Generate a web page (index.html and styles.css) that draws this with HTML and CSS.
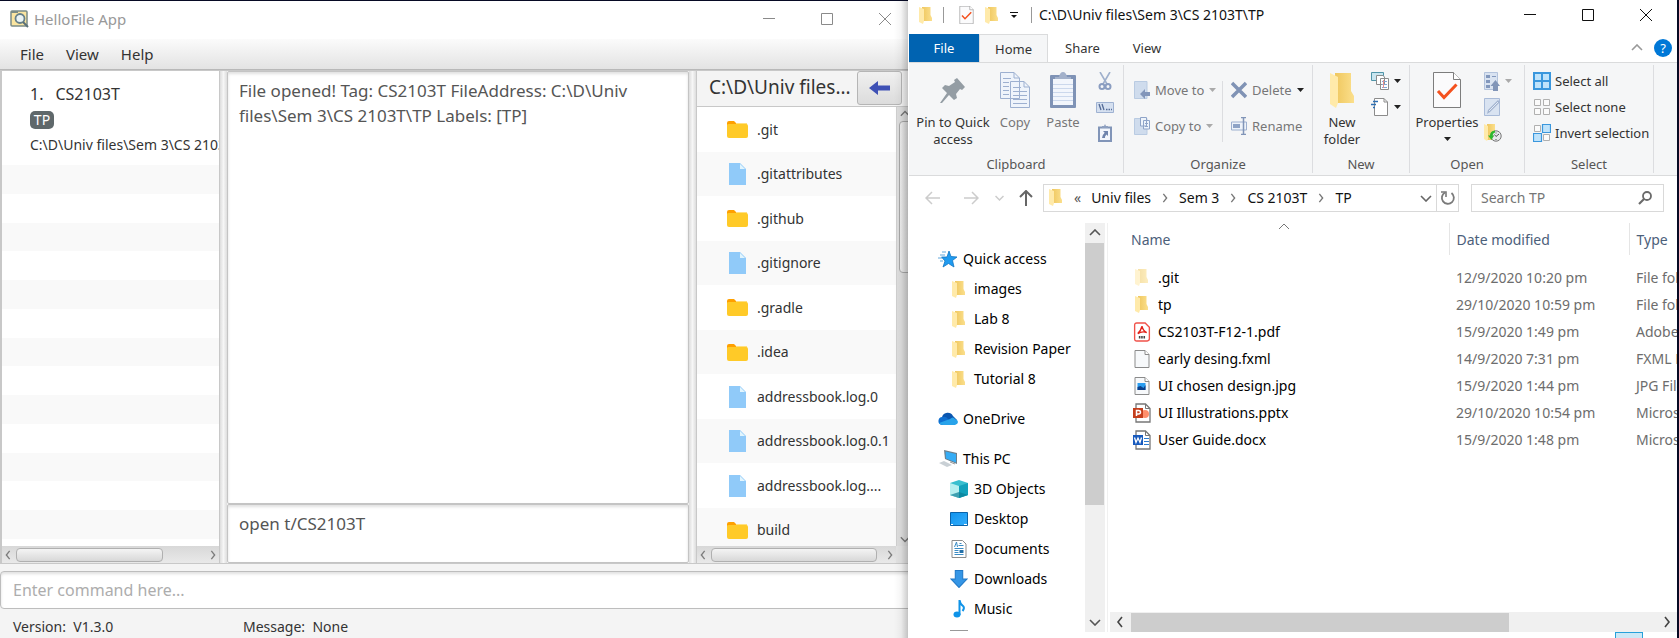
FILE: index.html
```
<!DOCTYPE html>
<html lang="en">
<head>
<meta charset="utf-8">
<title>HelloFile App</title>
<link rel="stylesheet" href="styles.css">
</head>
<body>
<svg class="defs" aria-hidden="true">
  <defs>
    <linearGradient id="gold" x1="0" y1="0" x2="1" y2="0"><stop offset="0" stop-color="#efc75e"/><stop offset="1" stop-color="#fbdf8c"/></linearGradient>
    <linearGradient id="blue" x1="0" y1="0" x2="1" y2="1"><stop offset="0" stop-color="#0f93ee"/><stop offset="1" stop-color="#35aefb"/></linearGradient>
  </defs>
  <symbol id="folder" viewBox="0 0 13 17"><path d="M3 0H11.5V8L13 11V14H3z" fill="url(#gold)"/><path d="M0 0 5 2V14L4 17 0 15z" fill="#ffeaaa"/></symbol>
  <symbol id="app-folder" viewBox="0 0 21 17"><path d="M0 2Q0 0 2 0H7L9 2H20V8H0z" fill="#ffa000"/><path d="M9 2H20V4H9z" fill="#ffe082"/><path d="M0 4Q0 3 2 3H19Q21 3 21 5V15Q21 17 19 17H2Q0 17 0 15z" fill="#ffca28"/></symbol>
  <symbol id="app-file" viewBox="0 0 17 22"><path d="M0 0H11L17 6V22H0z" fill="#90caf9"/><path d="M11 1V6H16z" fill="#e1f5fe"/></symbol>
  <symbol id="left" viewBox="0 0 8 12"><path d="M6 1 2 6 6 11" fill="none" stroke="currentColor" stroke-width="1.600"/></symbol>
  <symbol id="right" viewBox="0 0 8 12"><path d="M2 1 6 6 2 11" fill="none" stroke="currentColor" stroke-width="1.600"/></symbol>
  <symbol id="up" viewBox="0 0 12 8"><path d="M1 6 6 1 11 6" fill="none" stroke="currentColor" stroke-width="1.600"/></symbol>
  <symbol id="down" viewBox="0 0 12 8"><path d="M1 2 6 7 11 2" fill="none" stroke="currentColor" stroke-width="1.600"/></symbol>
  <symbol id="caret" viewBox="0 0 7 4"><path d="M0 0H7L3.500 4z" fill="currentColor"/></symbol>
  <symbol id="check-page" viewBox="0 0 28 36"><path d="M.5.5H20.500L27.500 7.500V35.500H.5z" fill="#fbfbfc" stroke="#7d7d7d"/><path d="M20.500.5V7.500H27.500" fill="#fff" stroke="#7d7d7d"/><path d="M5 19 11 25.500 23.500 12.500" fill="none" stroke="#f4511e" stroke-width="3"/></symbol>
  <symbol id="page" viewBox="0 0 15 18"><path d="M.5.5H10.500L14.500 4.500V17.500H.5z" fill="#f7f9fb" stroke="#8b8b8b"/><path d="M10.500.5V4.500H14.500" fill="#fff" stroke="#8b8b8b"/></symbol>
</svg>

<main class="desktop">
<section class="app" aria-label="HelloFile App">
  <header class="app-title">
    <svg class="app-logo" viewBox="0 0 19 18"><rect x="1" y="1" width="16" height="15" rx="1" fill="#fae5a0" stroke="#7b8c86" stroke-width="1.500"/><path d="M1 1H8V3H1z" fill="#7b8c86"/><circle cx="10" cy="8.500" r="4.500" fill="#eaf3f4" stroke="#66808a" stroke-width="1.800"/><path d="M13 12 18 17" stroke="#5a7078" stroke-width="2"/></svg>
    <h1>HelloFile App</h1>
    <div class="win-buttons">
      <button aria-label="Minimize"><svg viewBox="0 0 12 12"><path d="M0 5.500H12"/></svg></button>
      <button aria-label="Maximize"><svg viewBox="0 0 12 12"><path d="M.5.5H11.500V11.500H.5z"/></svg></button>
      <button aria-label="Close"><svg viewBox="0 0 12 12"><path d="M0 0 12 12M12 0 0 12"/></svg></button>
    </div>
  </header>
  <nav class="menu"><button>File</button><button>View</button><button>Help</button></nav>

  <div class="split">
    <section class="tags">
      <ol class="tag-list">
        <li class="tag-card">
          <h2><span>1.</span>CS2103T</h2>
          <span class="badge">TP</span>
          <p>C:\D\Univ files\Sem 3\CS 2103T\TP</p>
        </li>
        <li></li><li></li><li></li><li></li><li></li><li></li><li></li><li></li><li></li><li></li><li></li><li></li><li></li><li></li>
      </ol>
      <div class="fx-hbar"><svg><use href="#left"/></svg><div class="rail"><i style="width:78%"></i></div><svg><use href="#right"/></svg></div>
    </section>
    <div class="divider"></div>
    <section class="results">
      <textarea class="result" aria-label="Result" readonly>File opened! Tag: CS2103T FileAddress: C:\D\Univ files\Sem 3\CS 2103T\TP Labels: [TP]</textarea>
      <textarea class="history" aria-label="Last command" readonly>open t/CS2103T</textarea>
    </section>
    <div class="divider"></div>
    <section class="explorer-pane">
      <header><h2>C:\D\Univ files...</h2><button aria-label="Back"><svg viewBox="0 0 21 14"><path d="M0 7 9 0V4.500H21V9.500H9V14z" fill="#3f51b5"/></svg></button></header>
      <div class="pane-body">
        <ul class="pane-list">
          <li><svg class="fd"><use href="#app-folder"/></svg>.git</li>
          <li><svg class="fl"><use href="#app-file"/></svg>.gitattributes</li>
          <li><svg class="fd"><use href="#app-folder"/></svg>.github</li>
          <li><svg class="fl"><use href="#app-file"/></svg>.gitignore</li>
          <li><svg class="fd"><use href="#app-folder"/></svg>.gradle</li>
          <li><svg class="fd"><use href="#app-folder"/></svg>.idea</li>
          <li><svg class="fl"><use href="#app-file"/></svg>addressbook.log.0</li>
          <li><svg class="fl"><use href="#app-file"/></svg>addressbook.log.0.1</li>
          <li><svg class="fl"><use href="#app-file"/></svg>addressbook.log....</li>
          <li><svg class="fd"><use href="#app-folder"/></svg>build</li>
        </ul>
        <div class="fx-vbar"><svg><use href="#up"/></svg><div class="rail"><i style="height:37%"></i></div><svg><use href="#down"/></svg></div>
        <div class="fx-hbar"><svg><use href="#left"/></svg><div class="rail"><i style="width:97%"></i></div><svg><use href="#right"/></svg></div>
        <div class="fx-corner"></div>
      </div>
    </section>
  </div>

  <div class="command"><input type="text" aria-label="Command" placeholder="Enter command here..."></div>
  <footer class="status"><span>Version:&nbsp; V1.3.0</span><span>Message:&nbsp; None</span></footer>
</section>

<section class="files" aria-label="File Explorer">
  <header class="files-title">
    <svg class="ico-f"><use href="#folder"/></svg><i class="bar"></i>
    <svg class="ico-c"><use href="#check-page"/></svg>
    <svg class="ico-f"><use href="#folder"/></svg>
    <svg class="ico-m" viewBox="0 0 8 7"><path d="M0 .5H8" stroke="#111"/><path d="M1 3H7L4 6z" fill="#111"/></svg><i class="bar"></i>
    <h1>C:\D\Univ files\Sem 3\CS 2103T\TP</h1>
    <div class="win-buttons">
      <button aria-label="Minimize"><svg viewBox="0 0 12 12"><path d="M0 5.500H12"/></svg></button>
      <button aria-label="Maximize"><svg viewBox="0 0 12 12"><path d="M.5.5H11.500V11.500H.5z"/></svg></button>
      <button aria-label="Close"><svg viewBox="0 0 12 12"><path d="M0 0 12 12M12 0 0 12"/></svg></button>
    </div>
  </header>
  <nav class="tabs">
    <button class="file">File</button><button class="active">Home</button><button>Share</button><button>View</button>
    <div class="tabs-end">
      <button aria-label="Collapse ribbon"><svg class="collapse"><use href="#up"/></svg></button>
      <button class="help">?</button>
    </div>
  </nav>

  <div class="ribbon">
    <section class="group">
      <div class="tools">
        <button class="big pin"><svg width="26" height="36" viewBox="0 0 26 36"><path d="M17 6 25 15 22 18 20 17 16 22 17 26 14 28 9 23 2 31 0 31 7 21 2 16 5 13 9 14 15 10 14 8z" fill="#949da4"/></svg>Pin to Quick access</button>
        <button class="big copy dim"><svg width="30" height="36" viewBox="0 0 30 36"><path d="M.5.500H14L19.500 6V26.500H.5zM10.500 9.500H24L29.500 15V35.500H10.500z" fill="#eff4fb" stroke="#9db0d0"/><path d="M14 .5V6H19M24 9.500V15H29" fill="none" stroke="#9db0d0"/><path d="M3 6.500H11M3 10.500H9M3 14.500H9M3 18.500H9M3 22.500H9M13 15.500H21M13 19.500H27M13 23.500H27M13 27.500H27M13 31.500H27" stroke="#9db0d0"/></svg>Copy</button>
        <button class="big paste dim"><svg width="26" height="36" viewBox="0 0 26 36"><rect width="26" height="33" y="3" rx="1" fill="#7f93b6"/><path d="M3 7H23V33H3z" fill="#f2f6fc"/><path d="M3 12.500H23M3 16.500H23M3 20.500H23M3 24.500H23M3 28.500H23" stroke="#cbd8ec"/><path d="M5 7V5H9Q10 0 13 0T17 5H21V7z" fill="#a3b1ca"/></svg>Paste</button>
        <div class="stack">
          <button aria-label="Cut"><svg width="14" height="18" viewBox="0 0 14 18"><path d="M2 0 9 12M12 0 5 12" stroke="#9fb0cc" stroke-width="1.600"/><g fill="none" stroke="#8a9dc0" stroke-width="2"><ellipse cx="4" cy="14.500" rx="2.500" ry="2.500"/><ellipse cx="10" cy="14.500" rx="2.500" ry="2.500"/></g></svg></button>
          <button aria-label="Copy path"><svg width="18" height="11" viewBox="0 0 18 11"><path d="M.5.500H17.500V10.500H.5z" fill="#d5e0f0" stroke="#9fb2d2"/><path d="M3 2 5 8M6 2 8 8M10 7.500H11.500M12.500 7.500H14M15 7.500H16" stroke="#546b96" stroke-width="1.300"/></svg></button>
          <button aria-label="Paste shortcut"><svg width="14" height="18" viewBox="0 0 14 18"><path d="M1 3.500H13V17H1z" fill="#f2f6fc" stroke="#8195b8" stroke-width="2"/><path d="M4 4V2H6L7 0 8 2H10V4z" fill="#8ea0c0"/><path d="M5 7H10V12L8.500 10.500Q6.500 12 7 14L4 14Q4 11 6.700 8.700z" fill="#6e84ad"/></svg></button>
        </div>
      </div>
      <h2>Clipboard</h2>
    </section>
    <section class="group">
      <div class="tools organize">
        <div class="stack">
          <button class="dim"><svg width="16" height="18" viewBox="0 0 16 18"><path d="M.5.500H13V17.500H.5z" fill="#cfdced" stroke="#b9cbe2"/><path d="M6 13 11 8V11H16V15H11V18z" fill="#8296ba"/></svg>Move to<svg class="caret"><use href="#caret"/></svg></button>
          <button class="dim"><svg width="16" height="18" viewBox="0 0 16 18"><path d="M.5 1.500H13V17.500H.5z" fill="#cfdced" stroke="#b9cbe2"/><path d="M6.500.5H12.500V9H6.500zM9.500 3.500H15.500V12H9.500z" fill="#eef4fb" stroke="#8fa4c8"/><path d="M11 6.500H14M11 9.500H14" stroke="#8fa4c8"/></svg>Copy to<svg class="caret"><use href="#caret"/></svg></button>
        </div>
        <div class="stack second">
          <button class="dim"><svg width="16" height="18" viewBox="0 0 16 18"><path d="M1 2 15 16M15 2 1 16" stroke="#8093b5" stroke-width="3.500"/></svg>Delete<svg class="caret dark"><use href="#caret"/></svg></button>
          <button class="dim"><svg width="16" height="18" viewBox="0 0 16 18"><path d="M.5 5H15.500V13H.5z" fill="#eef3fa" stroke="#9db0d0"/><path d="M2 7H9V11H2z" fill="#8ea3c6"/><path d="M12.500 1V17M10 .5H15M10 17.500H15" stroke="#8195b8" stroke-width="1.500"/></svg>Rename</button>
        </div>
      </div>
      <h2>Organize</h2>
    </section>
    <section class="group">
      <div class="tools">
        <button class="big new"><svg width="24" height="36" viewBox="0 0 24 36"><path d="M5 1H21V19L24 24V31H5z" fill="url(#gold)"/><path d="M0 1 8 5V31L6 36 0 32z" fill="#ffeaaa"/></svg>New folder</button>
        <div class="stack">
          <button aria-label="New item"><svg width="18" height="18" viewBox="0 0 18 18"><path d="M.5.500H12.500V8.500H.5z" fill="#c8e5ef" stroke="#4f94a8"/><path d="M5.500 3.500H12L13.500 5V12.500H5.500zM9.500 6.500H17.500V17.500H9.500z" fill="#fff" stroke="#8c8c8c"/><path d="M11 9.500H16M11 12.500H16M11 15.500H16" stroke="#7fa6d8"/><path d="M12.500 8V16" stroke="#e69090"/></svg><svg class="caret dark"><use href="#caret"/></svg></button>
          <button aria-label="Easy access"><svg width="18" height="18" viewBox="0 0 18 18"><path d="M3.500.5H13L16.500 4V17.500H3.500z" fill="#fff" stroke="#8c8c8c"/><path d="M13 .5V4H16.500" fill="none" stroke="#8c8c8c"/><path d="M2 3.500H7M0 6.500H5M2 9.500H4" stroke="#2d6fb3" stroke-width="1.400"/></svg><svg class="caret dark"><use href="#caret"/></svg></button>
        </div>
      </div>
      <h2>New</h2>
    </section>
    <section class="group">
      <div class="tools">
        <button class="big props"><svg width="28" height="36"><use href="#check-page"/></svg>Properties<svg class="caret dark"><use href="#caret"/></svg></button>
        <div class="stack">
          <button aria-label="Open"><svg width="16" height="19" viewBox="0 0 16 19"><path d="M.5.500H13.500V17.500H.5z" fill="#d9e3f1" stroke="#b3c3dc"/><path d="M2 3H6V6H2zM2 8H6V11H2zM2 13H6V16H2z" fill="#8398bd"/><path d="M8 4.500H12" stroke="#8398bd"/><path d="M6.500 14 11.500 8 16 14H14V19H9V14z" fill="#8195b8"/></svg><svg class="caret"><use href="#caret"/></svg></button>
          <button aria-label="Edit"><svg width="16" height="18" viewBox="0 0 16 18"><path d="M.5.500H15.500V17.500H.5z" fill="#d9e3f1" stroke="#a9bbd8"/><path d="M3 16 4 12 14 2 16 4 6 14z" fill="#a3b4d0"/><path d="M5 13 14 4" stroke="#f3f7fc" stroke-width=".8"/></svg></button>
          <button aria-label="History"><svg width="18" height="18" viewBox="0 0 18 18"><path d="M3 0H11V16H3z" fill="url(#gold)"/><path d="M0 0 4 2V15L3 17 0 15z" fill="#ffeaaa"/><circle cx="12" cy="12" r="5.200" fill="#e8eaec" stroke="#777"/><path d="M12 8.500V9.500M12 15V16M8.500 12H9.500M10.500 10.500 12 12.500 15 10" stroke="#555" fill="none"/><path d="M11 6.500Q6 7 6 11.500H4L7.500 16 10 11.500H8.500Q9 9 11 8.500z" fill="#2eb82e"/></svg></button>
        </div>
      </div>
      <h2>Open</h2>
    </section>
    <section class="group">
      <div class="tools">
        <div class="stack select">
          <button><svg width="18" height="18" viewBox="0 0 18 18"><path d="M0 0H18V18H0z" fill="#3a97dd"/><path d="M2 2H8V8H2zM10 2H16V8H10zM2 10H8V16H2zM10 10H16V16H10z" fill="#bfe3fb"/></svg>Select all</button>
          <button><svg width="18" height="18" viewBox="0 0 18 18"><path d="M1.500 1.500H7.500V7.500H1.500zM10.500 1.500H16.500V7.500H10.500zM1.500 10.500H7.500V16.500H1.500zM10.500 10.500H16.500V16.500H10.500z" fill="#fbfbfb" stroke="#b0b0b0"/></svg>Select none</button>
          <button><svg width="18" height="18" viewBox="0 0 18 18"><path d="M1.500 1.500H7.500V7.500H1.500zM10.500 10.500H16.500V16.500H10.500z" fill="#fbfbfb" stroke="#b0b0b0"/><path d="M9.500.5H17.500V8.500H9.500zM.5 9.500H8.500V17.500H.5z" fill="#bfe3fb" stroke="#3a97dd" stroke-width="1.200"/></svg>Invert selection</button>
        </div>
      </div>
      <h2>Select</h2>
    </section>
  </div>

  <div class="address-row">
    <div class="history-nav">
      <button aria-label="Back"><svg viewBox="0 0 16 14"><path d="M15 7H1M7 1 1 7 7 13"/></svg></button>
      <button aria-label="Forward"><svg viewBox="0 0 16 14"><path d="M1 7H15M9 1 15 7 9 13"/></svg></button>
      <button aria-label="Recent" class="recent"><svg viewBox="0 0 8 14"><path d="M0 5 4 9 8 5"/></svg></button>
      <button aria-label="Up" class="up"><svg viewBox="0 0 14 16"><path d="M7 16V1M1 7 7 1 13 7"/></svg></button>
    </div>
    <nav class="address">
      <svg class="ico-f"><use href="#folder"/></svg>
      <span class="more">«</span>
      <a href="#">Univ files</a><svg class="crumb"><use href="#right"/></svg>
      <a href="#">Sem 3</a><svg class="crumb"><use href="#right"/></svg>
      <a href="#">CS 2103T</a><svg class="crumb"><use href="#right"/></svg>
      <a href="#">TP</a>
      <button class="drop" aria-label="Previous locations"><svg width="12" height="8"><use href="#down"/></svg></button>
      <button class="refresh" aria-label="Refresh"><svg width="16" height="16" viewBox="0 0 16 16"><path d="M5 2.500A6 6 0 1 0 11.500 3" fill="none" stroke="#7a7a7a" stroke-width="1.800"/><path d="M1 2H6V7" fill="none" stroke="#7a7a7a" stroke-width="1.600"/></svg></button>
    </nav>
    <div class="search"><input type="text" aria-label="Search TP" placeholder="Search TP"><svg width="14" height="14" viewBox="0 0 14 14"><circle cx="9" cy="5" r="4" fill="none" stroke="#6a6a6a" stroke-width="1.800"/><path d="M6 8 1 13" stroke="#6a6a6a" stroke-width="2.200"/></svg></div>
  </div>

  <div class="browser">
    <nav class="tree">
      <ul>
        <li class="root"><svg viewBox="0 0 20 18"><path d="M11 1 13 6.500 19 7 14.500 10.500 16 17 10.500 13.500 5 17 7 11 3.500 7H9z" fill="#1f9bf0" stroke="#1275c2" stroke-width=".8"/><path d="M4 2H8M2 5H7M0 8H4M2 11H5" stroke="#63a9dd"/></svg>Quick access</li>
        <li><svg class="ico-f"><use href="#folder"/></svg>images</li>
        <li><svg class="ico-f"><use href="#folder"/></svg>Lab 8</li>
        <li><svg class="ico-f"><use href="#folder"/></svg>Revision Paper</li>
        <li><svg class="ico-f"><use href="#folder"/></svg>Tutorial 8</li>
      </ul>
      <ul>
        <li class="root"><svg viewBox="0 0 20 14"><path d="M4 5A6 6 0 0 1 15 4L19 8 8 9z" fill="#0a56b0"/><path d="M4 13A4 4 0 1 1 5 5Q8 4 10 7L14 13z" fill="#0f6fd0"/><path d="M5 13Q2 13 1 11L12 7Q15 4 17 7 20 8 20 10T17 13z" fill="#28a3ea"/></svg>OneDrive</li>
      </ul>
      <ul>
        <li class="root"><svg viewBox="0 0 20 18"><path d="M6 0 19 3V14L7 9z" fill="#6c7f8c"/><path d="M7.500 1.500 18 4V12.500L8 8.500z" fill="#35acf5"/><path d="M1 13 6 11 14 15 9 17z" fill="#c9d0d5"/><path d="M12 12 17 14" stroke="#999"/></svg>This PC</li>
        <li><svg viewBox="0 0 18 18"><path d="M0 3 9 0 18 3V15L9 18 0 15z" fill="#39bfcf"/><path d="M0 3 9 6V18L0 15z" fill="#b6eff0"/><path d="M9 6 18 3V15L9 18z" fill="#12a1bb"/><path d="M0 15 9 12 18 15 9 18z" fill="#0c7f96" opacity=".7"/></svg>3D Objects</li>
        <li><svg viewBox="0 0 18 14"><path d="M.5.5H17.500V13.500H.5z" fill="url(#blue)" stroke="#0a63aa"/><path d="M1 12.500H3M14 12.500H17" stroke="#fff"/></svg>Desktop</li>
        <li><svg viewBox="0 0 15 18"><path d="M.5.5H11L14.500 4V17.500H.5z" fill="#fff" stroke="#8b8b8b"/><path d="M3 7 5 2 6 7M8 3.500H10M7 5.500H12M3 8.500H12M3 10.500H7M3 12.500H7M3 14.500H12" stroke="#3a8bc4" fill="none"/><path d="M8 10H12V13H8z" fill="#2470a8"/></svg>Documents</li>
        <li><svg viewBox="0 0 16 17"><path d="M4.500.5H11.500V8.500H15.500L8 16.500.5 8.500H4.500z" fill="#3596e6" stroke="#2079c8"/></svg>Downloads</li>
        <li><svg viewBox="0 0 12 18"><ellipse cx="4" cy="14.500" rx="3.500" ry="3" fill="#0f93e8"/><path d="M6.500 15V0Q7 4 10 6 12 8 9.500 11" fill="none" stroke="#0f93e8" stroke-width="2"/></svg>Music</li>
        <li><svg viewBox="0 0 18 18"><path d="M0 .5H18" stroke="#999"/></svg></li>
      </ul>
    </nav>
    <div class="vbar"><svg width="12" height="8"><use href="#up"/></svg><div class="rail"><i style="height:71%"></i></div><svg width="12" height="8"><use href="#down"/></svg></div>
    <div class="listing">
      <div class="table-wrap">
        <table>
          <colgroup><col><col class="c-date"><col class="c-type"></colgroup>
          <thead><tr><th>Name<svg class="sort" width="12" height="8" viewBox="0 0 12 8"><path d="M1 6 6 1 11 6" fill="none" stroke="#777"/></svg></th><th>Date modified</th><th>Type</th></tr></thead>
          <tbody>
            <tr><td><div><svg class="ico-f faded"><use href="#folder"/></svg>.git</div></td><td>12/9/2020 10:20 pm</td><td>File folder</td></tr>
            <tr><td><div><svg class="ico-f"><use href="#folder"/></svg>tp</div></td><td>29/10/2020 10:59 pm</td><td>File folder</td></tr>
            <tr><td><div><svg viewBox="0 0 16 19"><path d="M1 3Q1 1 3 1H11L15 5V16Q15 18 13 18H3Q1 18 1 16z" fill="#fff" stroke="#f0524a" stroke-width="1.300"/><path d="M8 4Q7 8 4 11Q8 8.500 12.500 10Q9 8.500 8 4" fill="none" stroke="#e2231a" stroke-width="1.300"/><path d="M5 14.500H11" stroke="#444" stroke-width="2.500" stroke-dasharray="1.500 .7"/></svg>CS2103T-F12-1.pdf</div></td><td>15/9/2020 1:49 pm</td><td>Adobe Acrobat</td></tr>
            <tr><td><div><svg viewBox="-1 -1 17 20"><path d="M.5.5H10.500L14.500 4.500V17.500H.5z" fill="#f7f9fb" stroke="#8b8b8b"/><path d="M10.500.5V4.500H14.500" fill="#fff" stroke="#8b8b8b"/></svg>early desing.fxml</div></td><td>14/9/2020 7:31 pm</td><td>FXML File</td></tr>
            <tr><td><div><svg viewBox="-1 -1 17 20"><path d="M.5.5H10.500L14.500 4.500V17.500H.5z" fill="#f7f9fb" stroke="#8b8b8b"/><path d="M10.500.5V4.500H14.500" fill="#fff" stroke="#8b8b8b"/><path d="M3 6H11V13H3z" fill="#2a9df0"/><path d="M3 13V10L6 9 9 11 11 8V13z" fill="#0b3f8a"/></svg>UI chosen design.jpg</div></td><td>15/9/2020 1:44 pm</td><td>JPG File</td></tr>
            <tr><td><div><svg viewBox="0 0 18 20"><path d="M3 1H12.500L17 5.500V19H3z" fill="#fff" stroke="#777" stroke-width="1.300"/><path d="M12.500 1V5.500H17" fill="none" stroke="#777"/><circle cx="12" cy="11" r="4" fill="#ff8f6b"/><path d="M0 5H10V15H0z" fill="#c43e1c"/><path d="M3.500 13V7.500H5.500Q7.500 7.500 7.500 9.200T5.500 11H4" fill="none" stroke="#fff" stroke-width="1.500"/></svg>UI Illustrations.pptx</div></td><td>29/10/2020 10:54 pm</td><td>Microsoft PowerPoint</td></tr>
            <tr><td><div><svg viewBox="0 0 18 20"><path d="M3 1H12.500L17 5.500V19H3z" fill="#fff" stroke="#777" stroke-width="1.300"/><path d="M12.500 1V5.500H17" fill="none" stroke="#777"/><path d="M11 8.500H16M11 11.500H16M11 14.500H16" stroke="#2b7cd3"/><path d="M0 5H10V15H0z" fill="#185abd"/><path d="M1.500 7.500 3 12.500 5 8 7 12.500 8.500 7.500" fill="none" stroke="#fff" stroke-width="1.300"/></svg>User Guide.docx</div></td><td>15/9/2020 1:48 pm</td><td>Microsoft Word</td></tr>
          </tbody>
        </table>
      </div>
      <div class="hbar"><svg width="8" height="12"><use href="#left"/></svg><div class="rail"><i style="width:72%"></i></div><svg width="8" height="12"><use href="#right"/></svg></div>
    </div>
  </div>
  <footer class="files-foot"><button aria-label="Details view"></button></footer>
</section>
</main>
</body>
</html>
```

FILE: styles.css
```
* { box-sizing: border-box; margin: 0; padding: 0; }
html, body { height: 100%; overflow: hidden; }
body { font: 14px/20px "Noto Sans", "Open Sans", sans-serif; color: #333; }
button, input, textarea { font: inherit; color: inherit; border: 0; background: none; outline: 0; }
h1, h2, th { font-weight: 400; }
ul, ol { list-style: none; }
svg { flex: none; display: block; }
.defs { position: absolute; width: 0; height: 0; }

.desktop { display: flex; height: 100vh; background: #070a24; }

/* HelloFile window */
.app { flex: 908 1 0; min-width: 0; display: flex; flex-direction: column; position: relative; overflow: hidden; margin-top: 1px; background: #f4f4f4; }
.app::after { content: ""; position: absolute; top: 0; right: 0; bottom: 0; width: 14px; pointer-events: none; background: linear-gradient(to right, transparent, rgba(0, 0, 0, .04) 50%, rgba(0, 0, 0, .2)); }
.app-title { flex: none; height: 38px; padding: 0 0 2px 10px; display: flex; align-items: center; gap: 5px; background: #fff; color: #999; }
.app-title h1 { font-size: 15px; flex: 1; }
.app-logo { width: 19px; height: 18px; }
.win-buttons { display: flex; margin-left: auto; }
.win-buttons button { width: 58px; height: 34px; display: flex; align-items: center; justify-content: center; }
.win-buttons svg { width: 12px; height: 12px; fill: none; stroke: currentColor; }
.app-title .win-buttons { margin-right: -6px; color: #8a8a8a; }

.menu { flex: none; height: 31px; padding-left: 9px; display: flex; background: linear-gradient(#fbfbfb, #e3e3e3); border-bottom: 1px solid #b8b8b8; }
.menu button { padding: 0 11px; font-size: 15px; }

.split { flex: 1; min-height: 0; display: grid; grid-template-columns: minmax(0, 220fr) 7px minmax(0, 462fr) 7px minmax(0, 212fr); border-top: 1px solid #c8c8c8; border-bottom: 1px solid #c8c8c8; }
.divider { background: linear-gradient(to right, #ddd, #f6f6f6 50%, #ddd); }
.tags { display: flex; flex-direction: column; min-height: 0; border: 1px solid #c8c8c8; border-width: 0 1px 0 2px; background: #fff; }
.tag-list { flex: 1; min-height: 0; overflow: hidden; }
.tag-list li { height: 29px; }
.tag-list li:nth-child(4n) { height: 28px; }
.tag-list li:nth-child(even) { background: #f9f9f9; }
.tag-list .tag-card { height: 94px; padding: 12px 0 0 28px; white-space: nowrap; overflow: hidden; }
.tag-card h2 { font-size: 16px; line-height: 22px; display: flex; gap: 12px; }
.badge { display: block; width: 24px; height: 18px; margin: 6px 0; border-radius: 5px; background: #5f686b; color: #fff; font-size: 14px; line-height: 18px; text-align: center; }

.fx-hbar { flex: none; height: 17px; display: flex; align-items: center; padding: 0 2px; background: linear-gradient(#d8d8d8, #e9e9e9); color: #7c7c7c; }
.fx-hbar svg { width: 8px; height: 10px; }
.fx-hbar .rail { flex: 1; margin: 0 4px; }
.fx-hbar i { display: block; height: 14px; border: 1px solid #b0b0b0; border-radius: 4px; background: linear-gradient(#f4f4f4, #d8d8d8); }

.results { display: flex; flex-direction: column; min-width: 0; }
.results textarea { display: block; resize: none; overflow: hidden; width: 100%; padding: 6px 11px; border: 1px solid #c4c4c4; border-radius: 2px; background: #fff; box-shadow: inset 0 2px 3px rgba(0, 0, 0, .12); font-size: 17px; line-height: 25px; color: #555; }
.result { flex: 1; min-height: 0; }
.history { flex: none; height: 59px; }

.explorer-pane { display: flex; flex-direction: column; min-width: 0; min-height: 0; border-left: 1px solid #c8c8c8; }
.explorer-pane header { flex: none; height: 36px; display: flex; border-bottom: 1px solid #c8c8c8; padding-right: 6px; }
.explorer-pane h2 { flex: 1; padding-left: 12px; font-size: 19px; line-height: 32px; white-space: nowrap; overflow: hidden; }
.explorer-pane header button { width: 45px; height: 34px; border: 1px solid #b5b5b5; border-radius: 3px; background: linear-gradient(#f0f0f0, #dcdcdc); display: flex; align-items: center; justify-content: center; }
.explorer-pane header svg { width: 21px; height: 14px; }
.pane-body { flex: 1; min-height: 0; display: grid; grid-template: minmax(0, 1fr) 17px / minmax(0, 1fr) 12px; }
.pane-list { overflow: hidden; background: #fff; }
.pane-list li { height: 45px; display: flex; align-items: center; gap: 9px; padding-left: 30px; white-space: nowrap; }
.pane-list li:nth-child(even) { height: 44px; background: #f9f9f9; }
.fd { width: 21px; height: 17px; }
.fl { width: 17px; height: 22px; margin: 0 2px; }
.fx-vbar { overflow: hidden; display: flex; flex-direction: column; background: #dedede; color: #777; border-left: 1px solid #d0d0d0; }
.fx-vbar svg { width: 10px; height: 8px; margin: 3px; }
.fx-vbar .rail { flex: 1; }
.fx-vbar i { display: block; width: 16px; margin-left: 2px; border: 1px solid #a8a8a8; border-radius: 4px; background: linear-gradient(to right, #ededed, #d4d4d4); }
.fx-corner { background: #e2e2e2; }

.command { flex: none; padding-top: 7px; }
.command input { display: block; width: 101%; height: 38px; padding: 0 12px; border: 1px solid #bdbdbd; border-radius: 4px; background: #fff; box-shadow: inset 0 2px 3px rgba(0, 0, 0, .12); font-size: 16px; }
.command input::placeholder { color: #adadad; opacity: 1; }
.status { flex: none; height: 29px; display: grid; grid-template-columns: 230px 1fr; padding: 8px 13px 0; }

/* File explorer window */
.files { flex: 768 1 0; min-width: 0; display: flex; flex-direction: column; margin-right: 2px; padding-left: 1px; background: #fff; color: #111; }
.ico-f { width: 13px; height: 17px; }
.faded { opacity: .55; }
.files-title { flex: none; height: 34px; padding: 0 0 4px 10px; display: flex; align-items: center; }
.files-title .bar { width: 1px; height: 16px; margin: 0 15px 0 11px; background: #999; }
.files-title .ico-c { width: 15px; height: 18px; margin-right: 11px; }
.ico-m { width: 8px; height: 7px; margin-left: 12px; }
.files-title .ico-m + .bar { margin: 0 7px 0 13px; }
.files-title h1 { font-size: 14px; white-space: nowrap; }
.files-title .win-buttons { padding-right: 2px; }
.files-title .win-buttons button { height: 30px; }

.tabs { flex: none; height: 28px; display: flex; align-items: stretch; font-size: 13px; color: #333; }
.tabs > button { width: 68px; padding: 0; }
.tabs .file { width: 70px; background: #0063b1; color: #fff; }
.tabs .active { width: 69px; border: 1px solid #dadbdc; border-bottom: 0; background: #f5f6f7; }
.tabs > .active ~ button { width: 69px; }
.tabs > button:nth-child(4) { width: 60px; }
.tabs-end { margin-left: auto; display: flex; align-items: center; gap: 11px; padding-right: 5px; color: #999; }
.collapse { width: 12px; height: 8px; }
.help { width: 18px; height: 18px; border-radius: 50%; background: #0078d7; color: #fff; line-height: 18px; }

.ribbon { flex: none; height: 114px; display: grid; grid-template-columns: 215px 189px 97px 115px 129px; background: #f5f6f7; border: 1px solid #dadbdc; border-width: 1px 0; padding-top: 2px; font-size: 13px; line-height: 17px; color: #333; }
.group { display: flex; flex-direction: column; height: 108px; border-right: 1px solid #dcdde0; }
.group h2 { font-size: 13px; line-height: 18px; color: #555; text-align: center; }
.tools { flex: 1; display: flex; padding-top: 7px; }
.ribbon button { color: inherit; white-space: nowrap; }
.ribbon button.dim { color: #777; }
.big { display: flex; flex-direction: column; align-items: center; height: 83px; gap: 6px; }
.ribbon .pin { width: 88px; white-space: normal; }
.copy { width: 36px; }
.paste { width: 60px; }
.new { width: 58px; }
.ribbon .new { white-space: normal; }
.props { width: 74px; }
.stack { display: flex; flex-direction: column; gap: 8px; }
.stack button { display: flex; align-items: center; height: 18px; gap: 5px; }
.paste + .stack { width: 24px; align-items: center; }
.caret { width: 7px; height: 4px; color: #aaa; }
.caret.dark { color: #222; }
.organize { padding: 16px 0 13px 10px; }
.organize .stack { gap: 18px; width: 88px; }
.organize .second { border-left: 1px solid #dcdde0; padding-left: 8px; }
.select { padding-left: 8px; }
.select button { gap: 4px; }

.address-row { flex: none; height: 43px; padding: 0 13px 0 16px; display: flex; align-items: center; }
.history-nav { width: 118px; display: flex; gap: 22px; align-items: center; }
.history-nav svg { width: 16px; height: 14px; fill: none; stroke: #ccc; stroke-width: 1.5; }
.history-nav .recent { margin: 0 -7px 0 -6px; }
.history-nav .recent svg { width: 9px; }
.history-nav .up svg { width: 14px; height: 16px; stroke: #666; stroke-width: 2; }
.address { flex: 1; height: 28px; border: 1px solid #d9d9d9; display: flex; align-items: center; padding-left: 5px; }
.address a { color: #111; text-decoration: none; white-space: nowrap; }
.more { margin: 0 10px 0 12px; color: #555; }
.crumb { width: 8px; height: 10px; margin: 0 10px; color: #777; }
.drop { margin: 0 4px 0 auto; color: #666; }
.refresh { width: 22px; height: 26px; padding-left: 3px; border-left: 1px solid #d9d9d9; }
.search { width: 193px; height: 28px; margin-left: 12px; border: 1px solid #d9d9d9; display: flex; align-items: center; padding: 0 11px 0 9px; }
.search input { flex: 1; min-width: 0; }
.search input::placeholder { color: #767676; opacity: 1; }

.browser { flex: 1; min-height: 0; display: flex; margin-top: 4px; }
.tree { width: 176px; padding-top: 21px; overflow: hidden; color: #000; }
.tree ul { margin-bottom: 10px; }
.tree li { height: 30px; display: flex; align-items: center; gap: 6px; padding-left: 41px; white-space: nowrap; }
.tree li svg { width: 18px; height: 18px; }
.tree li svg.ico-f { width: 13px; height: 17px; margin: 0 3px 0 2px; }
.tree .root { padding-left: 29px; gap: 5px; }
.tree .root svg { width: 20px; }
.vbar { width: 20px; display: flex; flex-direction: column; align-items: center; background: #f0f0f0; color: #555; }
.vbar > svg { margin: 6px 0; }
.vbar .rail { flex: 1; width: 100%; }
.vbar i { display: block; width: 19px; background: #cdcdcd; }
.listing { flex: 1; min-width: 0; display: flex; flex-direction: column; margin-left: 2px; border-left: 1px solid #f0f0f0; }
.table-wrap { flex: 1; min-height: 0; overflow: hidden; }
table { width: 100%; border-collapse: collapse; table-layout: fixed; color: #6d6d6d; }
.c-date { width: 180px; }
.c-type { width: 48px; }
th { height: 32px; padding: 1px 0 0 7px; text-align: left; color: #4c607a; border-right: 1px solid #e5e5e5; position: relative; white-space: nowrap; }
th:first-child { padding-left: 23px; }
th:last-child { border: 0; }
.sort { position: absolute; left: 50%; top: 0; }
tbody::before { content: ""; display: block; height: 9px; }
td { height: 27px; padding-left: 7px; white-space: nowrap; overflow: hidden; }
td:first-child { padding-left: 25px; color: #000; }
td div { display: flex; align-items: center; gap: 7px; }
td svg { width: 18px; height: 20px; }
td svg.ico-f { width: 13px; height: 17px; margin: 0 3px 0 2px; }
.hbar { flex: none; height: 20px; display: flex; align-items: center; margin-left: 2px; padding: 0 6px; gap: 7px; background: #f0f0f0; color: #444; }
.hbar .rail { flex: 1; height: 19px; }
.hbar i { display: block; height: 19px; background: #cdcdcd; }
.files-foot { flex: none; height: 6px; display: flex; justify-content: flex-end; padding-right: 34px; }
.files-foot button { width: 28px; border: 1px solid #26a0da; border-bottom: 0; background: #cbe8f6; }
```
